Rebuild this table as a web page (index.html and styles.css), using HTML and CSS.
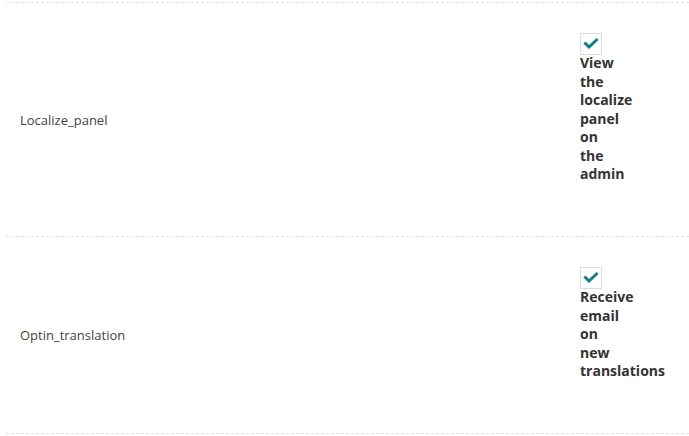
FILE: index.html
```html
<!DOCTYPE html>
<html>
<head>
<meta charset="utf-8">
<link rel="stylesheet" href="styles.css">
</head>
<body>
<div class="table">
  <div class="row">
    <div class="name">Localize_panel</div>
    <div class="value">
      <span class="checkbox"><svg width="22" height="22" viewBox="0 0 22 22"><polyline points="5.5,10.5 9,14 16.5,7" fill="none" stroke="#0f7f86" stroke-width="3" stroke-linecap="square"/></svg></span>
      <div class="label">View the localize panel on the admin</div>
    </div>
  </div>
  <div class="row">
    <div class="name">Optin_translation</div>
    <div class="value">
      <span class="checkbox"><svg width="22" height="22" viewBox="0 0 22 22"><polyline points="5.5,10.5 9,14 16.5,7" fill="none" stroke="#0f7f86" stroke-width="3" stroke-linecap="square"/></svg></span>
      <div class="label">Receive email on new translations</div>
    </div>
  </div>
</div>
</body>
</html>
```

FILE: styles.css
```css
html, body {
  margin: 0;
  padding: 0;
  background: #fff;
}
body {
  font-family: "Open Sans", sans-serif;
  padding: 2px 0 0 6px;
}
.table {
  border-top: 1px dashed #e2e2e2;
}
.row {
  display: grid;
  grid-template-columns: 574px 1fr;
  border-bottom: 1px dashed #e2e2e2;
}
.name {
  display: flex;
  align-items: center;
  padding-left: 14px;
  font-size: 13px;
  color: #444;
}
.value {
  padding: 30px 0 52.5px;
}
.checkbox {
  display: block;
  box-sizing: border-box;
  width: 22px;
  height: 22px;
  border: 1px solid #dcdcdc;
  background: #fff;
}
.checkbox svg {
  display: block;
  margin: -1px;
}
.label {
  width: 0;
  margin-top: -1px;
  font-size: 14px;
  font-weight: 700;
  line-height: 18.5px;
  color: #333;
}
```
